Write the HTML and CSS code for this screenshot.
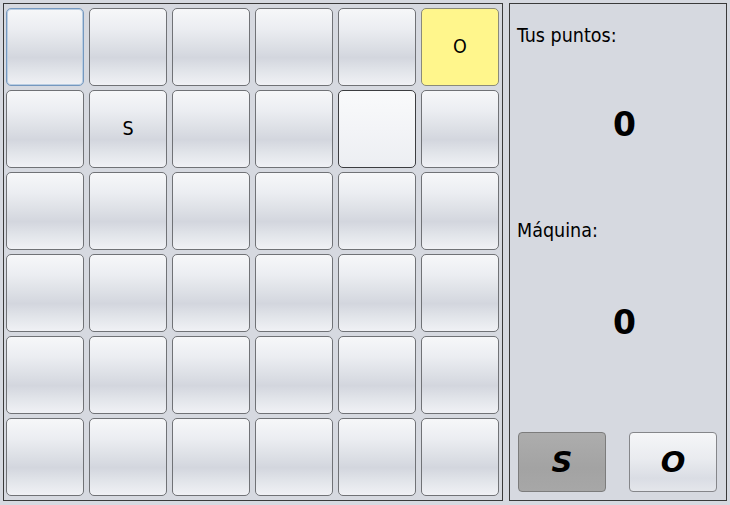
FILE: index.html
```html
<!DOCTYPE html>
<html lang="es">
<head>
<meta charset="utf-8">
<title>SOS</title>
<link rel="stylesheet" href="styles.css">
</head>
<body>
<div class="app">
  <div class="board">
    <button class="cell focus"></button>
    <button class="cell"></button>
    <button class="cell"></button>
    <button class="cell"></button>
    <button class="cell"></button>
    <button class="cell last">O</button>

    <button class="cell"></button>
    <button class="cell">S</button>
    <button class="cell"></button>
    <button class="cell"></button>
    <button class="cell hover"></button>
    <button class="cell"></button>

    <button class="cell"></button>
    <button class="cell"></button>
    <button class="cell"></button>
    <button class="cell"></button>
    <button class="cell"></button>
    <button class="cell"></button>

    <button class="cell"></button>
    <button class="cell"></button>
    <button class="cell"></button>
    <button class="cell"></button>
    <button class="cell"></button>
    <button class="cell"></button>

    <button class="cell"></button>
    <button class="cell"></button>
    <button class="cell"></button>
    <button class="cell"></button>
    <button class="cell"></button>
    <button class="cell"></button>

    <button class="cell"></button>
    <button class="cell"></button>
    <button class="cell"></button>
    <button class="cell"></button>
    <button class="cell"></button>
    <button class="cell"></button>
  </div>
  <div class="side">
    <div class="label label-1">Tus puntos:</div>
    <div class="score score-1">0</div>
    <div class="label label-2">Máquina:</div>
    <div class="score score-2">0</div>
    <div class="choices">
      <button class="choice selected">S</button>
      <button class="choice">O</button>
    </div>
  </div>
</div>
</body>
</html>
```

FILE: styles.css
```css
html, body {
  margin: 0;
  padding: 0;
  background: #d6d9e0;
}

body {
  width: 730px;
  height: 505px;
  overflow: hidden;
  font-family: "DejaVu Sans Condensed", "DejaVu Sans", sans-serif;
  font-stretch: condensed;
  color: #000;
}

.app {
  display: flex;
  gap: 6px;
  padding: 3px;
}

.board {
  box-sizing: border-box;
  width: 500px;
  height: 498px;
  border: 1px solid #3a3a3a;
  padding: 4px 3px 4px 2px;
  display: grid;
  grid-template-columns: repeat(6, 78px);
  grid-template-rows: repeat(6, 78px);
  column-gap: 5px;
  row-gap: 4px;
}

.cell {
  box-sizing: border-box;
  width: 78px;
  height: 78px;
  margin: 0;
  padding: 0;
  border: 1px solid #707276;
  border-radius: 5px;
  background: linear-gradient(to bottom, #f6f7f9 0%, #eceef2 25%, #dcdfe5 50%, #d3d6de 64%, #e2e5ea 82%, #f0f1f5 100%);
  font-family: "DejaVu Sans Condensed", "DejaVu Sans", sans-serif;
  font-stretch: condensed;
  font-size: 19.5px;
  color: #000;
  line-height: 1;
}

.cell.focus {
  border-color: #7598bf;
  box-shadow: inset 0 0 0 1px #b9cde2;
}

.cell.hover {
  border-color: #3c3d40;
  background: linear-gradient(to bottom, #f9fafb 0%, #f3f4f7 50%, #eceef2 100%);
}

.cell.last {
  background: #fff68c;
  border-color: #8a8a7a;
}

.side {
  box-sizing: border-box;
  width: 218px;
  height: 498px;
  border: 1px solid #3a3a3a;
  padding: 20px 9px 8px 7px;
  display: flex;
  flex-direction: column;
}

.label {
  font-size: 19.5px;
  line-height: 24px;
}

.score {
  font-family: "DejaVu Sans", sans-serif;
  font-stretch: normal;
  font-weight: bold;
  font-size: 33px;
  line-height: 40px;
  text-align: center;
  padding-left: 15px;
}

.score-1 { margin-top: 57px; }
.label-2 { margin-top: 74px; }
.score-2 { margin-top: 60px; }

.choices {
  margin-top: auto;
  display: flex;
  justify-content: space-between;
  padding-left: 1px;
}

.choice {
  box-sizing: border-box;
  width: 88px;
  height: 60px;
  margin: 0;
  padding: 0;
  border: 1px solid #85868a;
  border-radius: 4px;
  background: linear-gradient(to bottom, #f5f6f8 0%, #e9ebef 45%, #dadde4 78%, #e4e6eb 100%);
  font-family: "DejaVu Sans", sans-serif;
  font-weight: bold;
  font-style: italic;
  font-size: 29px;
  color: #000;
  line-height: 1;
}

.choice.selected {
  border-color: #7c7c7c;
  background: linear-gradient(to bottom, #adadad 0%, #a3a3a3 60%, #a7a7a7 100%);
}
```
